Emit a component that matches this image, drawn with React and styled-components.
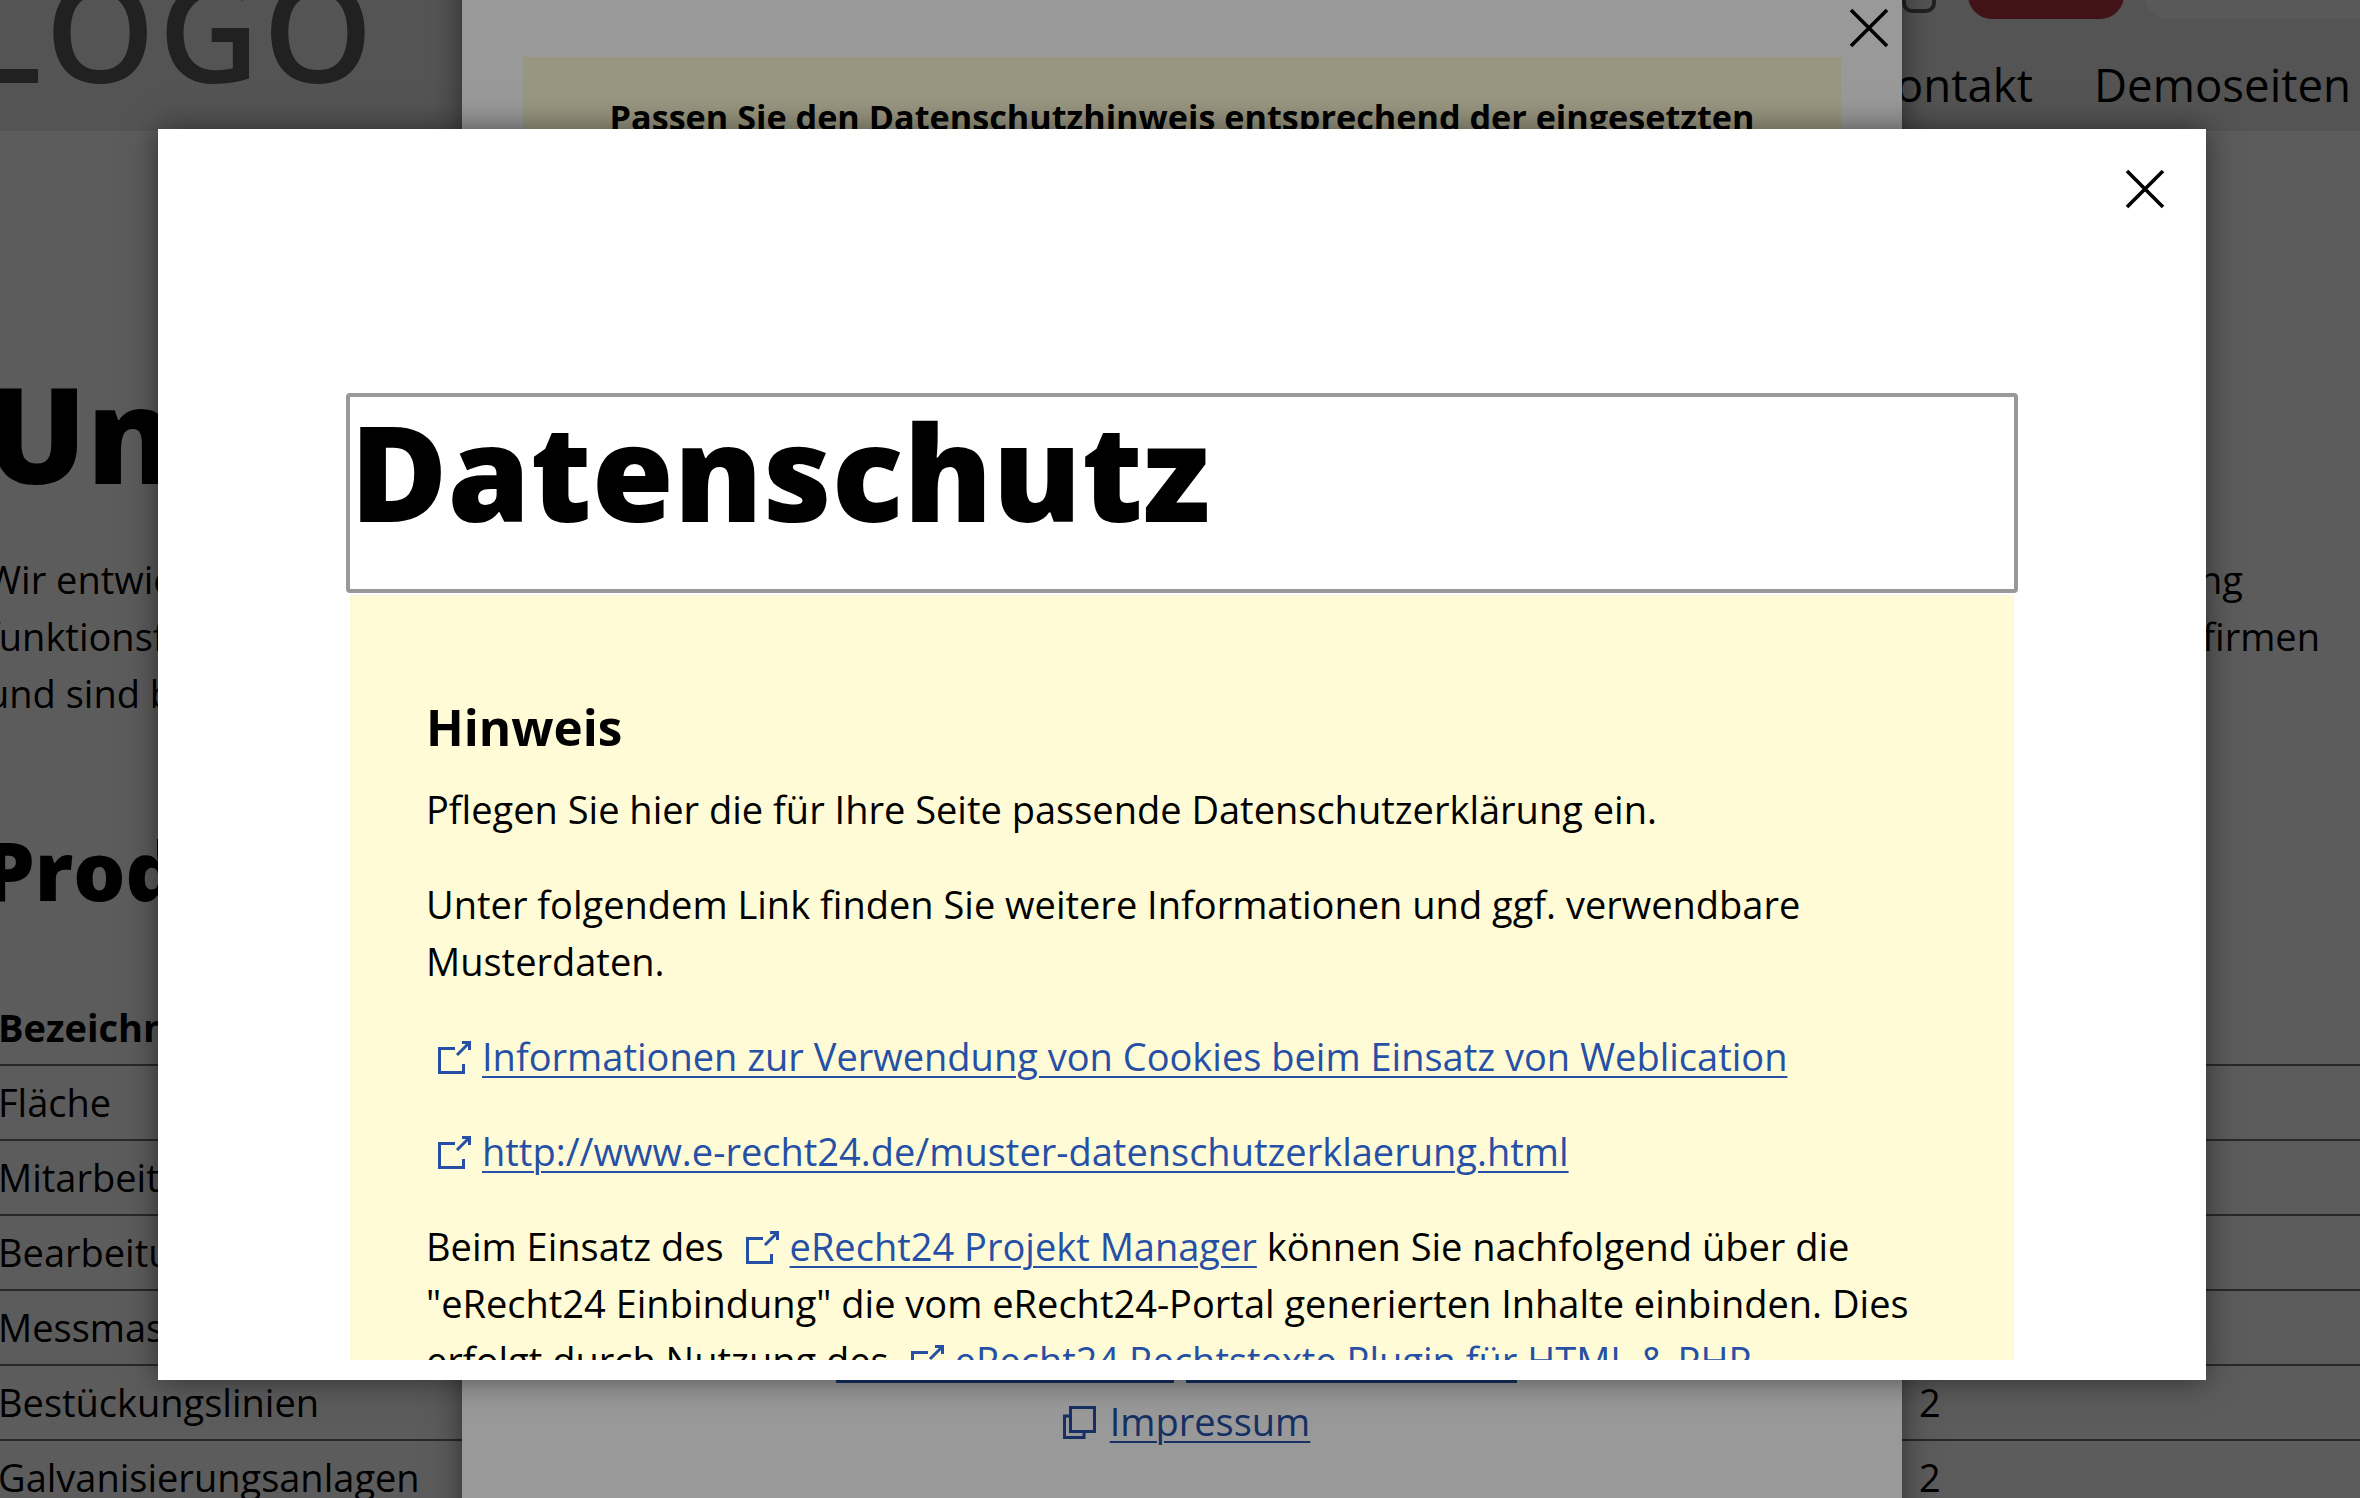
import React from "react";
import styled, { createGlobalStyle } from "styled-components";

const Global = createGlobalStyle`
  html, body { margin: 0; padding: 0; background: #fff; overflow: hidden; }
  body { font-family: "Open Sans", "Noto Sans", sans-serif; color: #000; }
  * { box-sizing: border-box; }
`;

const Page = styled.div`
  position: relative;
  width: 2360px;
  height: 1498px;
  overflow: hidden;
  background: #fff;
  font-size: 38px;
  line-height: 57px;
`;

const Header = styled.header`
  height: 231px;
  margin-top: -100px;
  background: #ececec;
  display: flex;
  justify-content: space-between;
`;

const Logo = styled.div`
  font-size: 140px;
  font-weight: 600;
  line-height: 140px;
  letter-spacing: 3px;
  color: #5e5e5e;
  margin: 59px 0 0 -34px;
`;

const HeaderRight = styled.div`
  display: flex;
  flex-direction: column;
  align-items: flex-end;
`;

const Tools = styled.div`
  display: flex;
  align-items: flex-start;
  height: 119px;
  width: 458px;
`;

const ToolFrame = styled.div`
  width: 34px;
  height: 113px;
  border: 4px solid #5e5e5e;
  border-radius: 10px;
  margin-right: 32px;
`;

const RedButton = styled.div`
  width: 156px;
  height: 119px;
  border-radius: 24px;
  background: #b9373f;
  margin-right: 21px;
`;

const GrayButton = styled.div`
  flex: 1;
  height: 119px;
  border-radius: 24px 0 0 24px;
  background: #f9f9f9;
`;

const Nav = styled.nav`
  display: flex;
  gap: 61px;
  font-size: 45.6px;
  line-height: 60px;
  padding: 35px 9px 0 0;
`;

const Main = styled.main``;

const HeroTitle = styled.h1`
  margin: 222px 0 0 -14px;
  font-size: 133px;
  font-weight: 800;
  line-height: 160px;
`;

const Intro = styled.div`
  margin: 38px 0 0 -14px;
`;

const IntroLine = styled.div`
  display: flex;
  justify-content: space-between;
  width: ${(p) => p.$width}px;
  white-space: nowrap;
`;

const SectionTitle = styled.h2`
  margin: 97px 0 0 -17px;
  font-size: 82px;
  font-weight: 800;
  line-height: 100px;
`;

const SpecTable = styled.table`
  width: 2362px;
  margin: 71px 0 0 -2px;
  border-collapse: collapse;
  table-layout: fixed;
`;

const SpecHead = styled.th`
  height: 75px;
  padding: 0;
  text-align: left;
  font-weight: 700;
  border-bottom: 2px solid #707070;
`;

const SpecHeadValue = styled(SpecHead)`
  width: 441px;
`;

const SpecCell = styled.td`
  height: 75px;
  padding: 0;
  border-bottom: 2px solid #707070;
`;

const Dim = styled.div`
  position: absolute;
  inset: 0;
  background: rgba(0, 0, 0, 0.4);
`;

const BackDialog = styled.section`
  position: absolute;
  left: 462px;
  top: -100px;
  bottom: -100px;
  width: 1440px;
  padding: 157px 61px 0;
  background: #fff;
  box-shadow: 0 0 30px rgba(0, 0, 0, 0.5);
  display: flex;
  flex-direction: column;
`;

const Close = styled.button`
  position: absolute;
  padding: 0;
  width: 40px;
  height: 40px;
  border: 0;
  background: none;
  right: ${(p) => p.$right}px;
  top: ${(p) => p.$top}px;
`;

const CloseIcon = () => (
  <svg width="40" height="40" viewBox="0 0 40 40" fill="none" stroke="#000" strokeWidth="3.6" aria-hidden="true">
    <path d="M2 2 L38 38 M38 2 L2 38" />
  </svg>
);

const Notice = styled.div`
  height: 1272px;
  background: #fffbd6;
  text-align: center;
  font-weight: 700;
  font-size: 34.2px;
  padding-top: 31px;
`;

const StubRow = styled.div`
  display: flex;
  justify-content: center;
  gap: 12px;
  margin-top: 50px;
  padding-right: 12px;
`;

const LinkStub = styled.span`
  display: block;
  width: ${(p) => p.$width}px;
  height: 4px;
  background: #2650a5;
`;

const FooterLink = styled.div`
  text-align: center;
  margin-top: 10px;
  padding-left: 9px;
`;

const Anchor = styled.a`
  color: #2650a5;
  text-decoration: underline;
  text-decoration-thickness: 2px;
  text-underline-offset: 5px;
`;

const FrontDialog = styled.section`
  position: absolute;
  left: 158px;
  top: 129px;
  width: 2048px;
  height: 1251px;
  padding: 264px 188px 0;
  background: #fff;
  box-shadow: 0 0 30px rgba(0, 0, 0, 0.5);
`;

const ScrollArea = styled.div`
  height: 967px;
  overflow: hidden;
`;

const TitleBox = styled.h1`
  height: 200px;
  margin: 0;
  border: 4px solid #999;
  border-radius: 4px;
  font-size: 133px;
  font-weight: 800;
  line-height: 148px;
`;

const HintBox = styled.div`
  margin: 2px 4px 0;
  padding: 99px 76px 0;
  background: #fffbd6;
  min-height: 800px;
`;

const HintTitle = styled.h3`
  margin: 0 0 21px;
  font-size: 49.4px;
  font-weight: 700;
  line-height: 66px;
`;

const Para = styled.p`
  margin: 0 0 38px;
`;

const IconGlyph = styled.svg`
  display: inline-block;
  vertical-align: -3px;
  margin: 0 11px 0 12px;
`;

const WindowGlyph = styled(IconGlyph)`
  margin: 0 14px 0 0;
`;

const External = () => (
  <IconGlyph width="33" height="33" viewBox="0 0 33 33" fill="none" stroke="#2650a5" strokeWidth="3" aria-hidden="true">
    <path d="M17 7.5 H1.5 V31.5 H25.5 V23" />
    <path d="M24 1.5 H31.5 V9 M31.5 1.5 L19 14" />
  </IconGlyph>
);

const WindowIcon = () => (
  <WindowGlyph width="33" height="33" viewBox="0 0 33 33" fill="none" stroke="#2650a5" strokeWidth="3" aria-hidden="true">
    <rect x="7.5" y="1.5" width="24" height="24" />
    <path d="M7 10 H1.5 V31.5 H21 V26" />
  </WindowGlyph>
);

const rows = [
  ["Fläche", ""],
  ["Mitarbeiter", ""],
  ["Bearbeitungszentren", ""],
  ["Messmaschinen", ""],
  ["Bestückungslinien", "2"],
  ["Galvanisierungsanlagen", "2"],
];

export default function App() {
  return (
    <>
      <Global />
      <Page>
        <Header>
          <Logo>LOGO</Logo>
          <HeaderRight>
            <Tools>
              <ToolFrame />
              <RedButton />
              <GrayButton />
            </Tools>
            <Nav>
              <span>Kontakt</span>
              <span>Demoseiten</span>
            </Nav>
          </HeaderRight>
        </Header>
        <Main>
          <HeroTitle>Unternehmen</HeroTitle>
          <Intro>
            <IntroLine $width={2257}>
              <span>Wir entwickeln</span>
              <span>Fertigung</span>
            </IntroLine>
            <IntroLine $width={2334}>
              <span>funktionsfähige</span>
              <span>Industriefirmen</span>
            </IntroLine>
            <IntroLine $width={2334}>
              <span>und sind bekannt</span>
            </IntroLine>
          </Intro>
          <SectionTitle>Produktion</SectionTitle>
          <SpecTable>
            <thead>
              <tr>
                <SpecHead>Bezeichnung</SpecHead>
                <SpecHeadValue />
              </tr>
            </thead>
            <tbody>
              {rows.map(([label, value]) => (
                <tr key={label}>
                  <SpecCell>{label}</SpecCell>
                  <SpecCell>{value}</SpecCell>
                </tr>
              ))}
            </tbody>
          </SpecTable>
        </Main>

        <Dim />
        <BackDialog>
          <Close $right={13} $top={108} aria-label="Schließen">
            <CloseIcon />
          </Close>
          <Notice>Passen Sie den Datenschutzhinweis entsprechend der eingesetzten</Notice>
          <StubRow>
            <LinkStub $width={338} />
            <LinkStub $width={331} />
          </StubRow>
          <FooterLink>
            <WindowIcon />
            <Anchor>Impressum</Anchor>
          </FooterLink>
        </BackDialog>

        <Dim />
        <FrontDialog>
          <Close $right={41} $top={40} aria-label="Schließen">
            <CloseIcon />
          </Close>
          <ScrollArea>
            <TitleBox>Datenschutz</TitleBox>
            <HintBox>
              <HintTitle>Hinweis</HintTitle>
              <Para>Pflegen Sie hier die für Ihre Seite passende Datenschutzerklärung ein.</Para>
              <Para>Unter folgendem Link finden Sie weitere Informationen und ggf. verwendbare Musterdaten.</Para>
              <Para>
                <External />
                <Anchor>Informationen zur Verwendung von Cookies beim Einsatz von Weblication</Anchor>
              </Para>
              <Para>
                <External />
                <Anchor>http://www.e-recht24.de/muster-datenschutzerklaerung.html</Anchor>
              </Para>
              <Para>
                Beim Einsatz des{" "}
                <External />
                <Anchor>eRecht24 Projekt Manager</Anchor> können Sie nachfolgend über die "eRecht24 Einbindung" die vom
                eRecht24-Portal generierten Inhalte einbinden. Dies erfolgt durch Nutzung des{" "}
                <External />
                <Anchor>eRecht24 Rechtstexte Plugin für HTML &amp; PHP</Anchor>.
              </Para>
            </HintBox>
          </ScrollArea>
        </FrontDialog>
      </Page>
    </>
  );
}
